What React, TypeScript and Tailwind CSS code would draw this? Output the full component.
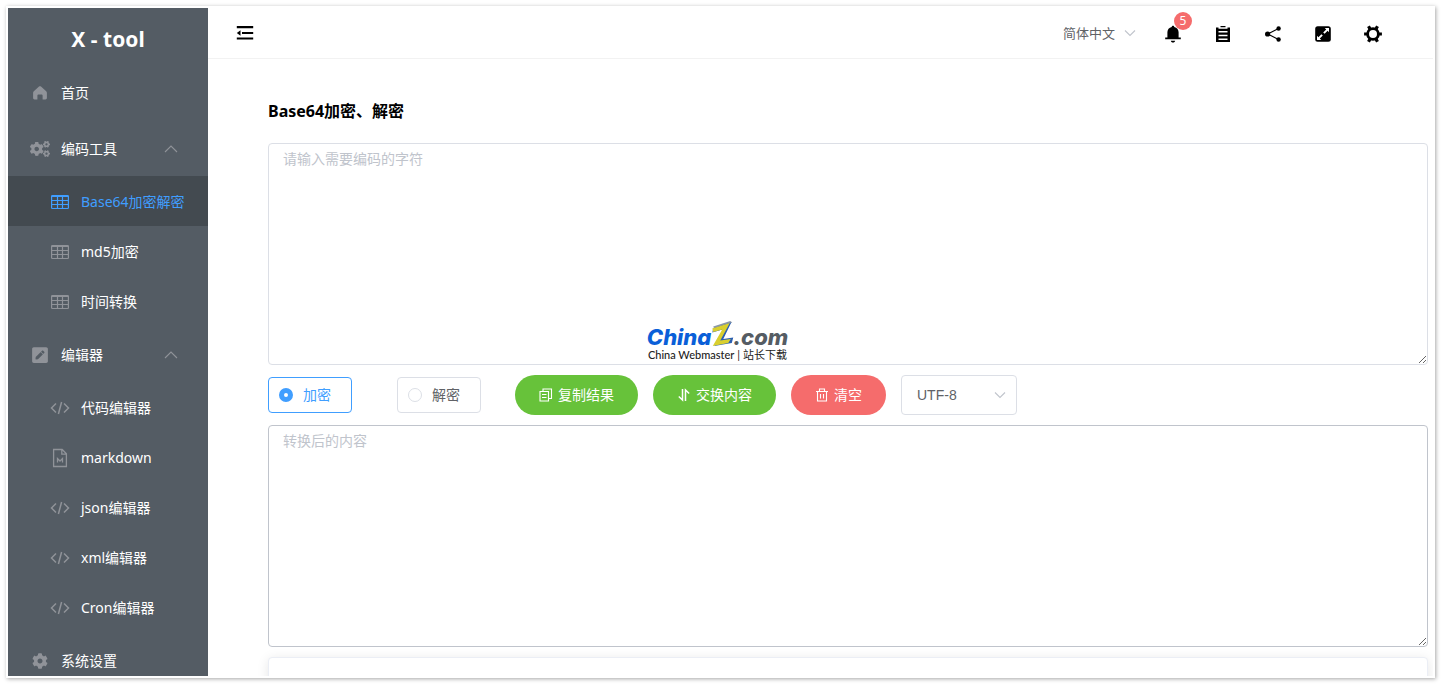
import { useState } from 'react';
import type { ReactNode } from 'react';
import { FaCog, FaCogs, FaPenSquare } from 'react-icons/fa';

const HomeIcon = () => (
  <svg viewBox="0 0 16 16" className="size-4" fill="currentColor">
    <path d="M8 1.200c.4 0 .7.1 1 .4l5.200 4.600c.4.4.7.9.7 1.500V13c0 .8-.6 1.400-1.400 1.400h-2.900v-3.800c0-.7-.5-1.200-1.200-1.200H6.600c-.7 0-1.200.5-1.200 1.200v3.800H2.500c-.8 0-1.400-.6-1.400-1.400V7.700c0-.6.3-1.100.7-1.500L7 1.600c.3-.3.6-.4 1-.4z" />
  </svg>
);

const TableIcon = () => (
  <svg viewBox="0 0 18 16" className="h-4 w-[18px]" fill="none" stroke="currentColor" strokeWidth="1.200">
    <rect x="0.600" y="1.500" width="16.800" height="13" rx="0.800" />
    <path d="M1 2.500h16M1 6.500h16M1 10.500h16M6.500 3v11M11.500 3v11" />
  </svg>
);

const CodeIcon = () => (
  <svg viewBox="0 0 20 16" className="h-4 w-5" fill="none" stroke="currentColor" strokeWidth="1.500">
    <path d="M6 3.500 1.500 8 6 12.500M14 3.500 18.500 8 14 12.500M11.600 2 8.400 14" />
  </svg>
);

const MarkdownIcon = () => (
  <svg viewBox="0 0 16 20" className="h-5 w-4" fill="none" stroke="currentColor" strokeWidth="1.300">
    <path d="M1.600 1.500h8.600l4.200 4.200v12.800H1.600zM9.800 1.500v4.600h4.600" />
    <path d="M5.500 14.500v-4L8 13l2.500-2.500v4" />
  </svg>
);

const Chevron = ({ up = false }: { up?: boolean }) => (
  <svg viewBox="0 0 14 8" className="h-2 w-3.5" fill="none" stroke="currentColor" strokeWidth="1.100">
    <path d={up ? 'M1 7 7 1l6 6' : 'M2 1.500 7 6.500l5-5'} />
  </svg>
);

const FoldIcon = () => (
  <svg viewBox="0 0 18 16" className="h-4 w-[18px]" fill="currentColor">
    <path d="M.8 1h16.400v2.200H.8zM6 7h11.200v2H6zM.8 12.400h16.400v2.200H.8zM.8 8l3.700-2.700v5.400z" />
  </svg>
);

const BellIcon = () => (
  <svg viewBox="0 0 18 18" className="size-[18px]" fill="currentColor">
    <path d="M9 .8c.7 0 1.200.4 1.300 1.100 2.600.6 4.300 2.600 4.300 5.300v5.400h2.200v1.600H1.200v-1.600h2.200V7.200c0-2.700 1.700-4.700 4.300-5.300C7.800 1.200 8.300.8 9 .8zM6.800 15.700h4.400c-.2 1.100-1 1.800-2.200 1.800s-2-.7-2.200-1.800z" />
  </svg>
);

const ClipboardIcon = () => (
  <svg viewBox="0 0 18 18" className="size-[18px]" fill="currentColor">
    <path d="M6.500 1h5v1.200h-5zM2 2.600h2.500v1.200h9V2.600H16V17H2zM4.500 6v1.500h9V6zm0 3.800v1.500h9V9.800zm0 3.700V15h9v-1.500z" fillRule="evenodd" />
  </svg>
);

const ShareIcon = () => (
  <svg viewBox="0 0 18 18" className="size-[18px]" fill="currentColor">
    <path d="M14.500 3.500 3.600 9l10.900 5.500" fill="none" stroke="currentColor" strokeWidth="1.100" />
    <circle cx="14.600" cy="3.500" r="2.200" />
    <circle cx="3.600" cy="9" r="2.600" />
    <circle cx="14.600" cy="14.500" r="2.200" />
  </svg>
);

const FullscreenIcon = () => (
  <svg viewBox="0 0 18 18" className="size-[18px]">
    <rect x="1.200" y="1.200" width="15.600" height="15.600" rx="2.500" fill="currentColor" />
    <path
      d="M10.800 3h4.200v4.200l-1.400-1.400-3 3-1.400-1.400 3-3zM7.200 15H3v-4.200l1.400 1.400 3-3 1.400 1.400-3 3z"
      fill="#fff"
    />
  </svg>
);

const GearIcon = () => (
  <svg viewBox="0 0 18 18" className="size-[18px]" fill="none" stroke="currentColor">
    <circle cx="9" cy="9" r="5.400" strokeWidth="2.800" />
    <path
      d="M4.500 1.200 6.200 4.200M13.500 1.200 11.800 4.200M17.900 9h-3M.1 9h3M4.500 16.800 6.200 13.800M13.500 16.800 11.800 13.800"
      strokeWidth="3.200"
    />
  </svg>
);

const CopyIcon = () => (
  <svg viewBox="0 0 14 14" className="size-3.5" fill="none" stroke="currentColor" strokeWidth="1.100">
    <path d="M4 3.500V1h8.500v9.500h-3M1 3.500h8.500V13H1zM3 6.500h4.500M3 9.500h4.500" />
  </svg>
);

const SwapIcon = () => (
  <svg viewBox="0 0 14 14" className="size-3.5" fill="none" stroke="currentColor" strokeWidth="1.500">
    <path d="M5.500 1v11L1.800 8.500M8.500 13V2l3.700 3.500" />
  </svg>
);

const TrashIcon = () => (
  <svg viewBox="0 0 14 14" className="size-3.5" fill="none" stroke="currentColor" strokeWidth="1.100">
    <path d="M1 3.500h12M2.500 3.500V13h9V3.500M4.500 3.500V1h5v2.500M5.500 6v4.500M8.500 6v4.500" />
  </svg>
);

function MenuItem({ icon, label, open }: { icon: ReactNode; label: string; open?: boolean }) {
  return (
    <a href="#" aria-expanded={open} className="flex h-14 shrink-0 items-center pt-0.5 pl-5 pr-[30px] text-white">
      <span className="mr-[9px] flex w-6 justify-center text-[#909399]">{icon}</span>
      <span className="flex-1">{label}</span>
      {open && (
        <span className="text-[#909399]">
          <Chevron up />
        </span>
      )}
    </a>
  );
}

function SubItem({ icon, label, active }: { icon: ReactNode; label: string; active?: boolean }) {
  return (
    <a
      href="#"
      className={
        active
          ? 'flex h-[50px] shrink-0 items-center bg-[#434a50] pt-0.5 pl-10 text-[#409eff]'
          : 'flex h-[50px] shrink-0 items-center pt-0.5 pl-10 text-white'
      }
    >
      <span className={active ? 'mr-[9px] flex w-6 justify-center' : 'mr-[9px] flex w-6 justify-center text-[#909399]'}>
        {icon}
      </span>
      <span>{label}</span>
    </a>
  );
}

function Sidebar() {
  return (
    <aside className="flex w-[200px] shrink-0 flex-col overflow-hidden bg-[#545c64]">
      <h1 className="flex h-14 shrink-0 items-center justify-center pt-1.5 text-[21px] font-bold text-white">X - tool</h1>
      <nav className="flex flex-col">
        <MenuItem icon={<HomeIcon />} label="首页" />
        <MenuItem icon={<FaCogs className="size-5" />} label="编码工具" open />
        <SubItem icon={<TableIcon />} label="Base64加密解密" active />
        <SubItem icon={<TableIcon />} label="md5加密" />
        <SubItem icon={<TableIcon />} label="时间转换" />
        <MenuItem icon={<FaPenSquare className="size-[18px]" />} label="编辑器" open />
        <SubItem icon={<CodeIcon />} label="代码编辑器" />
        <SubItem icon={<MarkdownIcon />} label="markdown" />
        <SubItem icon={<CodeIcon />} label="json编辑器" />
        <SubItem icon={<CodeIcon />} label="xml编辑器" />
        <SubItem icon={<CodeIcon />} label="Cron编辑器" />
        <MenuItem icon={<FaCog className="size-4" />} label="系统设置" />
      </nav>
    </aside>
  );
}

function Header() {
  return (
    <header className="flex h-[51px] shrink-0 items-center border-b border-[#f2f2f2] pl-7 pr-[35px]">
      <button aria-label="折叠菜单">
        <FoldIcon />
      </button>
      <div className="relative ml-auto mr-[11px] flex items-center">
        <select aria-label="语言" className="w-[74px] appearance-none bg-transparent text-[13px] text-[#606266] outline-none">
          <option>简体中文</option>
          <option>English</option>
        </select>
        <span className="pointer-events-none absolute right-0 text-[#c0c4cc]">
          <Chevron />
        </span>
      </div>
      <div className="flex items-center pt-0.5">
        <button aria-label="通知" className="relative flex w-[50px] justify-center">
          <BellIcon />
          <span className="absolute -top-[13px] left-[26px] flex size-[18px] items-center justify-center rounded-full bg-[#f56c6c] text-xs text-white">
            5
          </span>
        </button>
        <button aria-label="剪贴板" className="flex w-[50px] justify-center">
          <ClipboardIcon />
        </button>
        <button aria-label="分享" className="flex w-[50px] justify-center">
          <ShareIcon />
        </button>
        <button aria-label="全屏" className="flex w-[50px] justify-center">
          <FullscreenIcon />
        </button>
        <button aria-label="设置" className="flex w-[50px] justify-center">
          <GearIcon />
        </button>
      </div>
    </header>
  );
}

function ModeRadio({ label, checked, onSelect }: { label: string; checked: boolean; onSelect: () => void }) {
  return (
    <label
      className={
        checked
          ? 'flex h-9 w-[84px] items-center gap-2.5 rounded border border-[#409eff] pl-2.5 text-[#409eff]'
          : 'flex h-9 w-[84px] items-center gap-2.5 rounded border border-[#dcdfe6] pl-2.5 text-[#606266]'
      }
    >
      <input
        type="radio"
        name="mode"
        checked={checked}
        onChange={onSelect}
        className="size-3.5 appearance-none rounded-full border border-[#dcdfe6] bg-white checked:border-[5px] checked:border-[#409eff]"
      />
      <span>{label}</span>
    </label>
  );
}

function Watermark() {
  return (
    <div className="pointer-events-none absolute left-1/2 top-[314px] -translate-x-1/2 pr-1.5">
      <div className="flex h-7 items-end justify-center font-[Inter,sans-serif] text-[22px] leading-[22px] font-extrabold italic">
        <span className="text-[#0a5fd8]">China</span>
        <svg viewBox="0 0 24 28" className="-mx-px h-7 w-6">
          <path d="M3 6.500 20 1l2 1.500L4 9z" fill="#8a97a8" />
          <path d="M3 8.500 21 2.500 13 19l10-1.500-1.500 5.500L4 26 14 9 2 12.500z" fill="#2b5fb0" />
          <path d="M2 8.500 19.500 3 10 20.500l10.500-1.500L18 23 2.500 26 12 9.500 3 12z" fill="#d9cf2e" />
        </svg>
        <span className="text-[#555c63]">.com</span>
      </div>
      <div className="flex justify-center gap-[3px] whitespace-nowrap font-[Lato,'Noto_Sans_CJK_SC',sans-serif] text-[11px] leading-[14px] text-[#222]">
        <span className="font-medium">China Webmaster</span>
        <span>|</span>
        <span>站长下载</span>
      </div>
    </div>
  );
}

const areaClass =
  'block h-[222px] w-full resize rounded border bg-white px-3.5 py-1 text-sm leading-[21px] text-[#606266] outline-none placeholder:text-[#c0c4cc]';

export default function App() {
  const [mode, setMode] = useState<'encode' | 'decode'>('encode');
  return (
    <div className="h-screen bg-white p-1.5 font-['Noto_Sans','Noto_Sans_CJK_SC',sans-serif] text-sm text-black">
      <div className="relative flex h-full overflow-hidden p-0.5 shadow-[1px_1px_4px_rgba(0,0,0,0.35)]">
        <Sidebar />
        <div className="flex min-w-0 flex-1 flex-col overflow-hidden">
          <Header />
          <main className="flex min-h-0 flex-1 flex-col overflow-hidden pl-[60px] pr-[5px]">
            <h2 className="mt-10 text-base leading-6 font-bold">Base64加密、解密</h2>
            <div className="mt-5 shrink-0">
              <textarea aria-label="输入" placeholder="请输入需要编码的字符" className={`${areaClass} border-[#dcdfe6]`} />
            </div>
            <div className="my-2.5 flex shrink-0 items-center">
              <ModeRadio label="加密" checked={mode === 'encode'} onSelect={() => setMode('encode')} />
              <div className="ml-[45px]">
                <ModeRadio label="解密" checked={mode === 'decode'} onSelect={() => setMode('decode')} />
              </div>
              <div className="ml-[34px] flex gap-[15px]">
                <button className="flex h-10 w-[123px] items-center justify-center gap-[5px] rounded-full bg-[#67c23a] text-white">
                  <CopyIcon />
                  复制结果
                </button>
                <button className="flex h-10 w-[123px] items-center justify-center gap-[5px] rounded-full bg-[#67c23a] text-white">
                  <SwapIcon />
                  交换内容
                </button>
                <button className="flex h-10 w-[95px] items-center justify-center gap-[5px] rounded-full bg-[#f56c6c] text-white">
                  <TrashIcon />
                  清空
                </button>
                <div className="relative flex items-center">
                  <select
                    aria-label="编码"
                    className="h-10 w-[116px] appearance-none rounded border border-[#dcdfe6] bg-white pl-[15px] font-['Liberation_Sans',sans-serif] text-sm text-[#606266] outline-none"
                  >
                    <option>UTF-8</option>
                    <option>GBK</option>
                  </select>
                  <span className="pointer-events-none absolute right-2.5 text-[#c0c4cc]">
                    <Chevron />
                  </span>
                </div>
              </div>
            </div>
            <div className="shrink-0">
              <textarea aria-label="结果" placeholder="转换后的内容" className={`${areaClass} border-[#c0c4cc]`} />
            </div>
            <section className="mt-2.5 h-20 shrink-0 rounded border border-[#ebeef5] bg-white shadow-[0_2px_12px_rgba(0,0,0,0.1)]" />
          </main>
        </div>
        <Watermark />
      </div>
    </div>
  );
}
